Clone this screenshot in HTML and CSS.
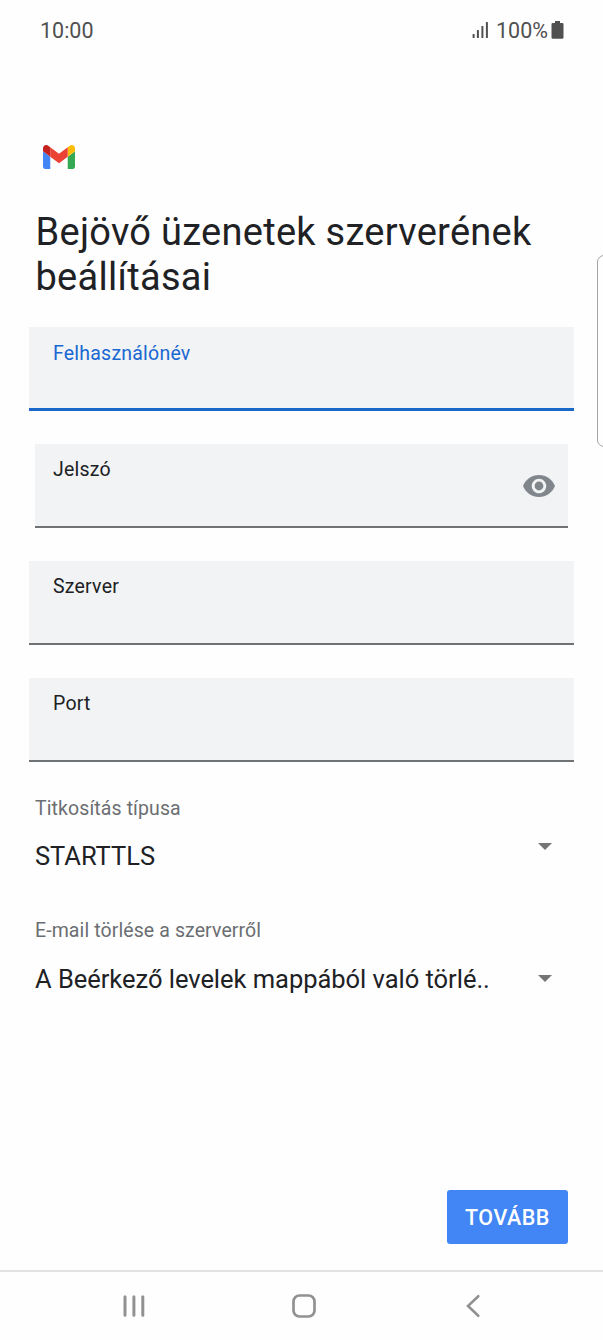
FILE: index.html
```html
<!DOCTYPE html>
<html lang="hu">
<head>
    <meta charset="UTF-8">
    <meta name="viewport" content="width=device-width, initial-scale=1.0">
    <title>Gmail</title>
    <link rel="stylesheet" href="styles.css">
</head>
<body>
    <!-- Status bar -->
    <div class="status-bar">
        <span class="clock">10:00</span>
        <div class="status-right">
            <svg class="signal" width="17" height="18" viewBox="0 0 17 18" fill="#505050">
                <rect x="0.6" y="13" width="2" height="4" rx="0.5"/>
                <rect x="4.9" y="9" width="2" height="8" rx="0.5"/>
                <rect x="9.4" y="5" width="2" height="12" rx="0.5"/>
                <rect x="13.9" y="1" width="2" height="16" rx="0.5"/>
            </svg>
            <span class="percent">100%</span>
            <svg class="battery" width="13" height="18" viewBox="0 0 13 18" fill="#505050">
                <path d="M4 0h5v2h2.2q1.3 0 1.3 1.3v13.2q0 1.3-1.3 1.3H1.8Q.5 17.800 .5 16.500V3.300Q.5 2 1.800 2H4z"/>
            </svg>
        </div>
    </div>

    <div class="edge-handle"></div>

    <main class="setup">
        <svg class="logo" width="32" height="24" viewBox="52 42 88 66">
            <path fill="#4285f4" d="M58 108h14V74L52 59v43c0 3.320 2.690 6 6 6"/>
            <path fill="#34a853" d="M120 108h14c3.320 0 6-2.690 6-6V59l-20 15"/>
            <path fill="#fbbc04" d="M120 48v26l20-15v-8c0-7.420-8.470-11.650-14.400-7.200"/>
            <path fill="#ea4335" d="M72 74V48l24 18 24-18v26L96 92"/>
            <path fill="#c5221f" d="M52 51v8l20 15V48l-5.600-4.200c-5.940-4.450-14.400-.22-14.400 7.200"/>
        </svg>

        <h1>Bejövő üzenetek szerverének beállításai</h1>

        <div class="fields">
            <div class="field active"><span>Felhasználónév</span></div>
            <div class="field password">
                <span>Jelszó</span>
                <svg class="eye" width="32" height="22" viewBox="1 4.500 22 15" preserveAspectRatio="none">
                    <path fill="#80868b" d="M12 4.500C7 4.500 2.730 7.610 1 12c1.730 4.390 6 7.500 11 7.500s9.270-3.110 11-7.500c-1.730-4.390-6-7.500-11-7.500zM12 17c-2.760 0-5-2.240-5-5s2.240-5 5-5 5 2.240 5 5-2.240 5-5 5zm0-8c-1.660 0-3 1.340-3 3s1.340 3 3 3 3-1.340 3-3-1.340-3-3-3z"/>
                </svg>
            </div>
            <div class="field"><span>Szerver</span></div>
            <div class="field"><span>Port</span></div>
        </div>

        <div class="select security">
            <span class="select-label">Titkosítás típusa</span>
            <div class="select-row">
                <span class="select-value">STARTTLS</span>
                <svg class="arrow" width="14" height="7" viewBox="0 0 14 7"><path fill="#757575" d="M0 0h14L7 7z"/></svg>
            </div>
        </div>

        <div class="select delete">
            <span class="select-label">E-mail törlése a szerverről</span>
            <div class="select-row">
                <span class="select-value">A Beérkező levelek mappából való törlé..</span>
                <svg class="arrow" width="14" height="7" viewBox="0 0 14 7"><path fill="#757575" d="M0 0h14L7 7z"/></svg>
            </div>
        </div>

        <button class="next">TOVÁBB</button>
    </main>

    <!-- Navigation bar -->
    <nav class="nav-bar">
        <svg width="24" height="24" viewBox="0 0 24 24" fill="none" stroke="#919191" stroke-width="3" stroke-linecap="round">
            <path d="M3 2.700v18.600M11.900 2.700v18.600M20.800 2.700v18.600"/>
        </svg>
        <svg width="24" height="24" viewBox="0 0 24 24" fill="none" stroke="#919191" stroke-width="2.700">
            <rect x="1.500" y="1.500" width="21" height="21" rx="6"/>
        </svg>
        <svg width="24" height="24" viewBox="0 0 24 24" fill="none" stroke="#919191" stroke-width="2.600" stroke-linecap="round">
            <path d="M17.300 2.200L7 12l10.300 9.800"/>
        </svg>
    </nav>
</body>
</html>
```
FILE: styles.css
```css
* {
    box-sizing: border-box;
}

body {
    font-family: Roboto, sans-serif;
    background-color: #fefefe;
    color: #202124;
    margin: 0;
    height: 1340px;
    display: flex;
    flex-direction: column;
    position: relative;
    overflow: hidden;
}

svg {
    display: block;
    flex-shrink: 0;
}

.status-bar {
    height: 60px;
    padding: 0 39px 0 40px;
    display: flex;
    justify-content: space-between;
    align-items: center;
    font-size: 21.5px;
    color: #505050;
}

.status-right {
    display: flex;
    align-items: center;
}

.percent {
    margin: 0 3px 0 7px;
}

/* edge panel handle on the right side of the screen */
.edge-handle {
    position: absolute;
    top: 255px;
    right: -10px;
    width: 16px;
    height: 192px;
    border: 1px solid #a5a5a5;
    border-radius: 7px;
}

.setup {
    flex: 1;
    padding: 85px 35px 0;
    display: flex;
    flex-direction: column;
}

.logo {
    margin-left: 8px;
}

h1 {
    font-size: 38px;
    font-weight: 400;
    line-height: 45px;
    letter-spacing: 0.28px;
    margin: 41px -1px 27px 0.5px;
}

.fields {
    display: flex;
    flex-direction: column;
    gap: 33px;
    margin: 0 -6px;
}

.field {
    height: 84px;
    padding: 14px 24px 0;
    background-color: #f1f3f4;
    border-bottom: 2px solid #707376;
    font-size: 19.5px;
    line-height: 24px;
    letter-spacing: 0.22px;
}

.field.active {
    padding-top: 15px;
    color: #1967d2;
    border-bottom: 3px solid #1967c8;
}

.field.password {
    margin: 0 6px;
    padding: 14px 13px 0 18px;
    display: flex;
    justify-content: space-between;
}

.eye {
    margin-top: 17px;
}

.select {
    display: flex;
    flex-direction: column;
}

.security {
    margin-top: 35px;
}

.delete {
    margin-top: 48px;
}

.select-label {
    font-size: 19.5px;
    line-height: 24px;
    letter-spacing: 0.1px;
    color: #6b6e72;
}

.select-row {
    display: flex;
    justify-content: space-between;
    padding: 21px 16px 0 0;
}

.select-value {
    font-size: 25.5px;
    line-height: 30px;
    letter-spacing: -0.03px;
    white-space: nowrap;
}

.security .select-value {
    margin-top: -1px;
}

.security .arrow {
    margin-top: 1px;
}

.delete .arrow {
    margin-top: 11px;
}

.next {
    width: 121px;
    height: 54px;
    margin: auto 0 26px auto;
    padding: 0;
    background-color: #4285f4;
    color: white;
    border: none;
    border-radius: 3px;
    font-family: inherit;
    font-size: 21.5px;
    font-weight: 500;
    letter-spacing: 0.5px;
}

.nav-bar {
    height: 70px;
    border-top: 2px solid #e2e2e2;
    padding: 0 118px 0 122px;
    display: flex;
    justify-content: space-between;
    align-items: center;
}
```
